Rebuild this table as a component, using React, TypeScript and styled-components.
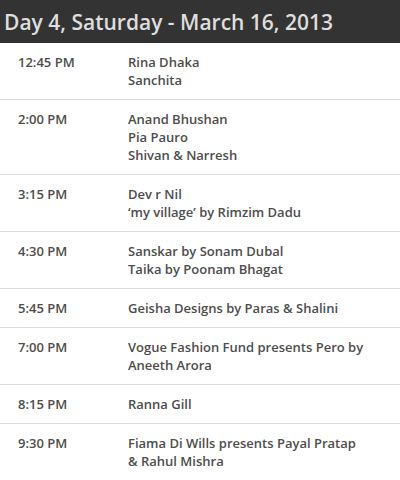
import React from 'react';
import styled, { createGlobalStyle } from 'styled-components';

interface Slot {
  time: string;
  shows: string[];
}

const slots: Slot[] = [
  { time: '12:45 PM', shows: ['Rina Dhaka', 'Sanchita'] },
  { time: '2:00 PM', shows: ['Anand Bhushan', 'Pia Pauro', 'Shivan & Narresh'] },
  { time: '3:15 PM', shows: ['Dev r Nil', '‘my village’ by Rimzim Dadu'] },
  { time: '4:30 PM', shows: ['Sanskar by Sonam Dubal', 'Taika by Poonam Bhagat'] },
  { time: '5:45 PM', shows: ['Geisha Designs by Paras & Shalini'] },
  { time: '7:00 PM', shows: ['Vogue Fashion Fund presents Pero by Aneeth Arora'] },
  { time: '8:15 PM', shows: ['Ranna Gill'] },
  { time: '9:30 PM', shows: ['Fiama Di Wills presents Payal Pratap & Rahul Mishra'] },
];

const GlobalStyle = createGlobalStyle`
  html, body {
    margin: 0;
    padding: 0;
    background: #ffffff;
    font-family: 'Open Sans', 'DejaVu Sans', sans-serif;
  }
`;

const Page = styled.div`
  width: 400px;
  height: 480px;
  overflow: hidden;
  background: #ffffff;
`;

const DayHeader = styled.h2`
  margin: 0;
  height: 43px;
  padding: 1px 0 0 4px;
  box-sizing: border-box;
  display: flex;
  align-items: center;
  background: #333333;
  color: #dedede;
  font-size: 21px;
  font-weight: 600;
  letter-spacing: 0;
`;

const Row = styled.div`
  display: flex;
  padding: 10px 0 10px 18px;
  border-bottom: 1px solid #dcdcdc;
  font-size: 13px;
  line-height: 18px;
  font-weight: 600;
  color: #4d4d4d;
`;

const Time = styled.div`
  flex: 0 0 110px;
`;

const Shows = styled.div`
  width: 238px;
`;

const Show = styled.div``;

const App: React.FC = () => {
  return (
    <Page>
      <GlobalStyle />
      <DayHeader>Day 4, Saturday - March 16, 2013</DayHeader>
      {slots.map(slot => (
        <Row key={slot.time}>
          <Time>{slot.time}</Time>
          <Shows>
            {slot.shows.map(show => (
              <Show key={show}>{show}</Show>
            ))}
          </Shows>
        </Row>
      ))}
    </Page>
  );
};

export default App;
